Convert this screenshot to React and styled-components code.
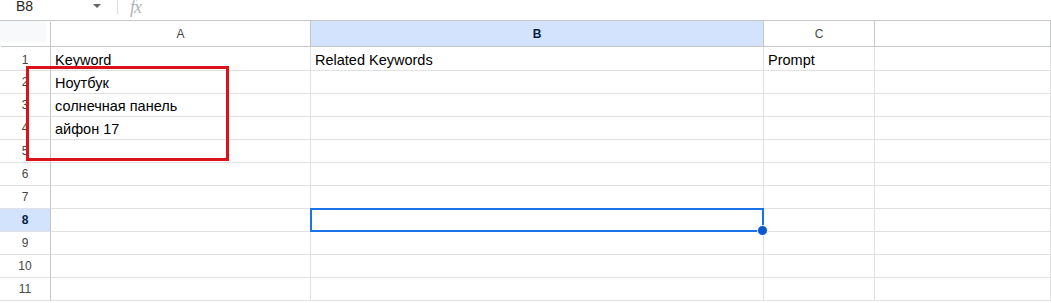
import React from 'react';
import styled, { createGlobalStyle } from 'styled-components';

const GlobalStyle = createGlobalStyle`
  html, body {
    margin: 0;
    padding: 0;
    background: #ffffff;
    overflow: hidden;
  }
  body {
    font-family: 'Liberation Sans', Arial, sans-serif;
  }
`;

const COLS = [
  { key: 'A', width: 260 },
  { key: 'B', width: 453 },
  { key: 'C', width: 111 },
  { key: '', width: 176 }
];

const DATA = {
  1: { A: 'Keyword', B: 'Related Keywords', C: 'Prompt' },
  2: { A: 'Ноутбук' },
  3: { A: 'солнечная панель' },
  4: { A: 'айфон 17' }
};

const ROWS = [1, 2, 3, 4, 5, 6, 7, 8, 9, 10, 11];
const ACTIVE_ROW = 8;
const ACTIVE_COL = 'B';

export default function App() {
  return (
    <>
      <GlobalStyle />
      <Page>
        <FormulaBar>
          <NameBox>
            <CellRef>B8</CellRef>
            <Caret />
          </NameBox>
          <Divider />
          <Fx>fx</Fx>
        </FormulaBar>

        <Sheet>
          <Grid cols={COLS}>
            <Corner />
            {COLS.map(c => (
              <ColHead key={c.key || 'blank'} active={c.key === ACTIVE_COL}>
                {c.key}
              </ColHead>
            ))}

            {ROWS.map(r => (
              <React.Fragment key={r}>
                <RowHead active={r === ACTIVE_ROW} first={r === 1}>
                  {r}
                </RowHead>
                {COLS.map(c => (
                  <Cell key={c.key || 'blank'}>
                    {DATA[r] && DATA[r][c.key]}
                    {r === ACTIVE_ROW && c.key === ACTIVE_COL && (
                      <Selection>
                        <Handle />
                      </Selection>
                    )}
                  </Cell>
                ))}
              </React.Fragment>
            ))}
          </Grid>

          <Annotation />
        </Sheet>
      </Page>
    </>
  );
}

const Page = styled.div`
  width: 1051px;
  height: 303px;
  overflow: hidden;
  background: #fff;
`;

const FormulaBar = styled.div`
  display: flex;
  align-items: flex-start;
  height: 21px;
  box-sizing: border-box;
  border-bottom: 1px solid #c4c7c5;
`;

const NameBox = styled.div`
  display: flex;
  align-items: flex-start;
  width: 117px;
  padding-left: 16px;
  box-sizing: border-box;
`;

const CellRef = styled.span`
  font-size: 14px;
  line-height: 12px;
  color: #1f1f1f;
  flex: 1;
`;

const Caret = styled.span`
  width: 0;
  height: 0;
  margin: 4px 16px 0 0;
  border-left: 4px solid transparent;
  border-right: 4px solid transparent;
  border-top: 4px solid #5f6368;
`;

const Divider = styled.div`
  width: 1px;
  height: 14px;
  background: #dadce0;
`;

const Fx = styled.span`
  margin-left: 12px;
  font-family: 'Liberation Serif', 'Times New Roman', serif;
  font-style: italic;
  font-size: 18px;
  line-height: 14px;
  color: #b0b3b8;
  letter-spacing: -1px;
`;

const Sheet = styled.div`
  position: relative;
`;

const Grid = styled.div`
  display: grid;
  grid-template-columns: 51px ${p => p.cols.map(c => `${c.width}px`).join(' ')};
  grid-template-rows: 26px 24px repeat(10, 23px);
`;

const Corner = styled.div`
  background: #f8f9fa;
  box-sizing: border-box;
  border-right: 4px solid #fff;
  border-bottom: 4px solid #fff;
  box-shadow: 1px 1px 0 #c4c7c5;
  margin: 0 1px 1px 0;
`;

const ColHead = styled.div`
  display: flex;
  align-items: center;
  justify-content: center;
  box-sizing: border-box;
  border-right: 1px solid #c4c7c5;
  border-bottom: 1px solid #c4c7c5;
  background: ${p => (p.active ? '#d3e3fd' : '#fff')};
  color: ${p => (p.active ? '#041e49' : '#444746')};
  font-weight: ${p => (p.active ? 700 : 400)};
  font-size: 12px;
  padding-top: 1px;
`;

const RowHead = styled.div`
  display: flex;
  align-items: center;
  justify-content: center;
  box-sizing: border-box;
  border-right: 1px solid #c4c7c5;
  border-bottom: 1px solid #e1e1e1;
  background: ${p => (p.active ? '#d3e3fd' : '#fff')};
  color: ${p => (p.active ? '#041e49' : '#444746')};
  font-weight: ${p => (p.active ? 700 : 400)};
  font-size: 12px;
  padding-top: ${p => (p.first ? '2px' : '0')};
`;

const Cell = styled.div`
  position: relative;
  display: flex;
  align-items: flex-end;
  box-sizing: border-box;
  border-right: 1px solid #e1e1e1;
  border-bottom: 1px solid #e1e1e1;
  padding: 0 4px 1px;
  font-size: 14.5px;
  line-height: 17px;
  color: #000;
  white-space: nowrap;
`;

const Selection = styled.div`
  position: absolute;
  left: -1px;
  top: -1px;
  right: -1px;
  bottom: -1px;
  border: 2px solid #1a73e8;
  z-index: 2;
`;

const Handle = styled.div`
  position: absolute;
  right: -6px;
  bottom: -6px;
  width: 9px;
  height: 9px;
  border-radius: 50%;
  background: #0b57d0;
  border: 1px solid #fff;
`;

const Annotation = styled.div`
  position: absolute;
  left: 26px;
  top: 45px;
  width: 203px;
  height: 95px;
  box-sizing: border-box;
  border: 3px solid #d9121c;
  z-index: 3;
  pointer-events: none;
`;
